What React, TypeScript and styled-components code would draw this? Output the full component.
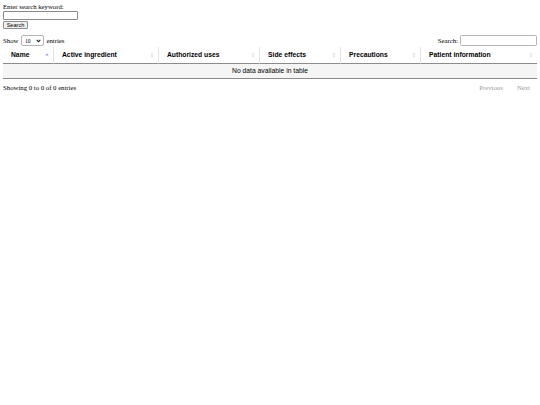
import styled, { createGlobalStyle } from "styled-components";

const GlobalStyle = createGlobalStyle`
  html, body {
    margin: 0;
    padding: 0;
    background: #ffffff;
  }
  body {
    font-family: "Liberation Serif", "Times New Roman", serif;
    font-size: 6.75px;
    color: #000000;
  }
`;

const columns = [
  { label: "Name", width: 51, sort: "asc" },
  { label: "Active ingredient", width: 105, sort: "both" },
  { label: "Authorized uses", width: 101, sort: "both" },
  { label: "Side effects", width: 81, sort: "both" },
  { label: "Precautions", width: 80, sort: "both" },
  { label: "Patient information", width: 116, sort: "both" },
];

function SortIcon({ mode }: { mode: string }) {
  if (mode === "asc") {
    return (
      <SortMark width="4" height="6" viewBox="0 0 4 6">
        <path d="M2 1.2 L3.6 3.4 L0.4 3.4 Z" fill="#8fa2cf" />
      </SortMark>
    );
  }
  return (
    <SortMark width="4" height="6" viewBox="0 0 4 6">
      <path d="M2 0.6 L3.4 2.5 L0.6 2.5 Z" fill="#dcdcdc" />
      <path d="M2 5.4 L3.4 3.5 L0.6 3.5 Z" fill="#dcdcdc" />
    </SortMark>
  );
}

export default function App() {
  return (
    <Page>
      <GlobalStyle />
      <SearchForm>
        <Label htmlFor="keyword">Enter search keyword:</Label>
        <KeywordInput id="keyword" type="text" />
        <SearchButton type="button">Search</SearchButton>
      </SearchForm>

      <Toolbar>
        <LengthControl>
          Show
          <SelectWrap>
            <LengthSelect defaultValue="10">
              <option value="10">10</option>
              <option value="25">25</option>
              <option value="50">50</option>
              <option value="100">100</option>
            </LengthSelect>
            <Chevron width="5" height="4" viewBox="0 0 5 4">
              <path d="M0.7 0.9 L2.5 2.8 L4.3 0.9" fill="none" stroke="#111" strokeWidth="1.1" />
            </Chevron>
          </SelectWrap>
          entries
        </LengthControl>
        <FilterControl>
          Search:
          <FilterInput type="search" />
        </FilterControl>
      </Toolbar>

      <Table>
        <thead>
          <tr>
            {columns.map((c, i) => (
              <HeadCell key={c.label} style={{ width: c.width }} $last={i === columns.length - 1}>
                <HeadInner>
                  {c.label}
                  <SortIcon mode={c.sort} />
                </HeadInner>
              </HeadCell>
            ))}
          </tr>
        </thead>
        <tbody>
          <tr>
            <EmptyCell colSpan={columns.length}>No data available in table</EmptyCell>
          </tr>
        </tbody>
      </Table>

      <Footer>
        <Info>Showing 0 to 0 of 0 entries</Info>
        <Pager>
          <PageButton>Previous</PageButton>
          <PageButton>Next</PageButton>
        </Pager>
      </Footer>
    </Page>
  );
}

const Page = styled.div`
  padding: 3px;
  width: 534px;
`;

const SearchForm = styled.div`
  display: flex;
  flex-direction: column;
  align-items: flex-start;
`;

const Label = styled.label`
  line-height: 8px;
`;

const KeywordInput = styled.input`
  box-sizing: border-box;
  width: 75px;
  height: 9px;
  margin: 0;
  padding: 0 1px;
  border: 1px solid #8a8a8a;
  border-radius: 1px;
  font-size: 5.6px;
  outline: none;
`;

const SearchButton = styled.button`
  box-sizing: border-box;
  margin: 0;
  margin-top: 0.5px;
  width: 25px;
  height: 8.5px;
  padding: 0;
  border: 1px solid #8f8f8f;
  border-radius: 1px;
  background: #efefef;
  font-family: "Liberation Sans", Arial, sans-serif;
  font-size: 5.6px;
  line-height: 6px;
  color: #000000;
`;

const Toolbar = styled.div`
  display: flex;
  justify-content: space-between;
  align-items: center;
  height: 12px;
  margin-top: 5.5px;
`;

const LengthControl = styled.label`
  display: flex;
  align-items: center;
  gap: 2.5px;
`;

const SelectWrap = styled.span`
  position: relative;
  display: inline-flex;
`;

const LengthSelect = styled.select`
  appearance: none;
  box-sizing: border-box;
  width: 23px;
  height: 11px;
  margin: 0;
  padding: 0 0 0 3px;
  border: 1px solid #b5b5b5;
  border-radius: 2px;
  background: #ffffff;
  font-family: "Liberation Serif", "Times New Roman", serif;
  font-size: 5.6px;
  color: #000000;
  outline: none;
`;

const Chevron = styled.svg`
  position: absolute;
  right: 3px;
  top: 3.5px;
  pointer-events: none;
`;

const FilterControl = styled.label`
  display: flex;
  align-items: center;
  gap: 2px;
`;

const FilterInput = styled.input`
  box-sizing: border-box;
  width: 77px;
  height: 11px;
  margin: 0;
  border: 1px solid #b5b5b5;
  border-radius: 1.5px;
  font-size: 5.6px;
  outline: none;
`;

const Table = styled.table`
  width: 534px;
  border-collapse: separate;
  border-spacing: 0;
  table-layout: fixed;
  font-family: "Liberation Sans", Arial, sans-serif;
  font-size: 6.75px;
  border-bottom: 1px solid #8c8c8c;
`;

const HeadCell = styled.th<{ $last: boolean }>`
  box-sizing: border-box;
  height: 17px;
  padding: 0 4px 0 8px;
  text-align: left;
  font-weight: bold;
  line-height: 8px;
  border-bottom: 1px solid #8c8c8c;
  border-right: ${({ $last }) => ($last ? "none" : "1px solid #e4e4e4")};
`;

const HeadInner = styled.div`
  display: flex;
  align-items: center;
  justify-content: space-between;
`;

const SortMark = styled.svg`
  flex: none;
`;

const EmptyCell = styled.td`
  height: 14px;
  padding: 0;
  text-align: center;
  background: #f5f5f5;
  line-height: 8px;
`;

const Footer = styled.div`
  display: flex;
  justify-content: space-between;
  align-items: center;
  padding-top: 5px;
`;

const Info = styled.div`
  line-height: 8px;
`;

const Pager = styled.div`
  display: flex;
`;

const PageButton = styled.span`
  padding: 0 7px;
  line-height: 8px;
  color: #9a9a9a;
`;
